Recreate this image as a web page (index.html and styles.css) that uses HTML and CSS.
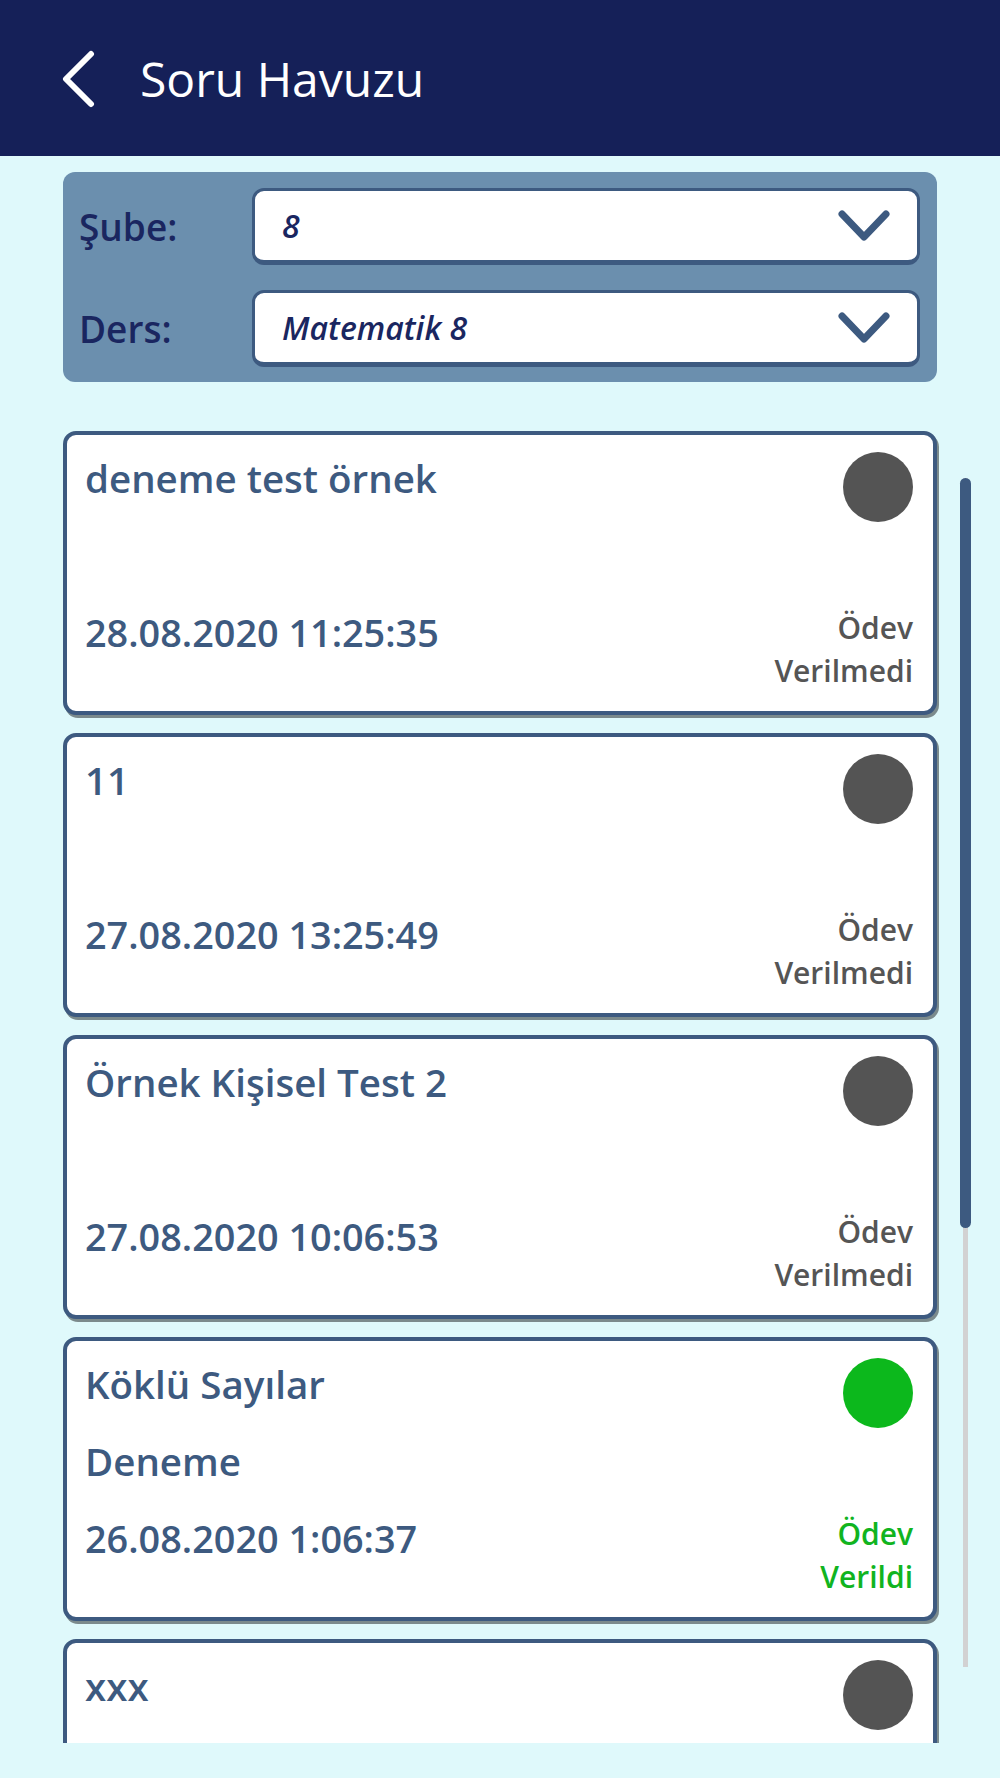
FILE: index.html
```html
<!DOCTYPE html>
<html lang="tr">
<head>
    <meta charset="UTF-8">
    <meta name="viewport" content="width=device-width, initial-scale=1.0">
    <title>Soru Havuzu</title>
    <link rel="stylesheet" href="styles.css">
</head>
<body>
    <header class="topbar">
        <svg class="back-icon" width="38" height="58" viewBox="0 0 38 58">
            <polyline points="32,4 7,29 32,54" fill="none" stroke="#fff" stroke-width="6" stroke-linecap="round" stroke-linejoin="round"/>
        </svg>
        <h1 class="page-title">Soru Havuzu</h1>
    </header>

    <main class="content">
        <div class="filter-box">
            <div class="filter-row">
                <span class="filter-label">Şube:</span>
                <div class="picker">
                    <span class="picker-value">8</span>
                    <svg class="picker-arrow" width="52" height="32" viewBox="0 0 52 32">
                        <polyline points="4,4 26,27 48,4" fill="none" stroke="#3d5a80" stroke-width="7" stroke-linecap="round" stroke-linejoin="round"/>
                    </svg>
                </div>
            </div>
            <div class="filter-row">
                <span class="filter-label">Ders:</span>
                <div class="picker">
                    <span class="picker-value">Matematik 8</span>
                    <svg class="picker-arrow" width="52" height="32" viewBox="0 0 52 32">
                        <polyline points="4,4 26,27 48,4" fill="none" stroke="#3d5a80" stroke-width="7" stroke-linecap="round" stroke-linejoin="round"/>
                    </svg>
                </div>
            </div>
        </div>

        <div class="list-wrap">
            <div class="test-list">
                <div class="test-card">
                    <div class="test-title">deneme test örnek</div>
                    <div class="test-sub"></div>
                    <div class="test-date">28.08.2020 11:25:35</div>
                    <span class="status-dot"></span>
                    <div class="status-text">Ödev<br>Verilmedi</div>
                </div>
                <div class="test-card">
                    <div class="test-title">11</div>
                    <div class="test-sub"></div>
                    <div class="test-date">27.08.2020 13:25:49</div>
                    <span class="status-dot"></span>
                    <div class="status-text">Ödev<br>Verilmedi</div>
                </div>
                <div class="test-card">
                    <div class="test-title">Örnek Kişisel Test 2</div>
                    <div class="test-sub"></div>
                    <div class="test-date">27.08.2020 10:06:53</div>
                    <span class="status-dot"></span>
                    <div class="status-text">Ödev<br>Verilmedi</div>
                </div>
                <div class="test-card">
                    <div class="test-title">Köklü Sayılar</div>
                    <div class="test-sub">Deneme</div>
                    <div class="test-date">26.08.2020 1:06:37</div>
                    <span class="status-dot done"></span>
                    <div class="status-text done">Ödev<br>Verildi</div>
                </div>
                <div class="test-card">
                    <div class="test-title">xxx</div>
                    <span class="status-dot"></span>
                </div>
            </div>
            <div class="scroll-track">
                <div class="scroll-thumb"></div>
            </div>
        </div>
    </main>
</body>
</html>
```

FILE: styles.css
```css
body {
    margin: 0;
    background-color: #dff9fb;
    font-family: 'Open Sans', 'Noto Sans', sans-serif;
    height: 1778px;
    overflow: hidden;
}
.topbar {
    height: 156px;
    background-color: #152058;
    display: flex;
    align-items: center;
    padding-left: 59px;
}
.back-icon {
    margin-top: 2px;
}
.page-title {
    margin: 0 0 0 43px;
    color: #fff;
    font-size: 48px;
    font-weight: 400;
}
.content {
    padding: 16px 0 0 63px;
}
.filter-box {
    width: 874px;
    box-sizing: border-box;
    background-color: #6b8fae;
    border-radius: 12px;
    padding: 16px 17px 15px 16px;
    display: flex;
    flex-direction: column;
    gap: 25px;
}
.filter-row {
    display: flex;
    align-items: center;
}
.filter-label {
    width: 173px;
    color: #1a2660;
    font-size: 37px;
    font-weight: 600;
}
.picker {
    flex: 1;
    height: 77px;
    box-sizing: border-box;
    background: #fff;
    border: 3px solid #3d5a80;
    border-bottom-width: 5px;
    border-radius: 12px;
    display: flex;
    align-items: center;
    justify-content: space-between;
    padding: 0 27px 0 27px;
}
.picker-value {
    color: #1a2660;
    font-size: 32px;
    font-style: italic;
    font-weight: 600;
}
.list-wrap {
    margin-top: 49px;
    height: 1312px;
    overflow: hidden;
    display: flex;
    align-items: flex-start;
}
.test-list {
    width: 874px;
    display: flex;
    flex-direction: column;
    gap: 18px;
}
.test-card {
    flex-shrink: 0;
    height: 284px;
    box-sizing: border-box;
    background: #fff;
    border: 4px solid #3d5a80;
    border-radius: 13px;
    box-shadow: 2px 3px 0 #7b8a8c;
    padding: 17px 20px 19px 18px;
    display: grid;
    grid-template-columns: 1fr auto;
    grid-template-rows: 77px 77px auto;
    color: #3d5a80;
}
.test-title, .test-sub {
    font-size: 38.5px;
    font-weight: 600;
    line-height: 53px;
}
.test-title { grid-column: 1; grid-row: 1; }
.test-sub { grid-column: 1; grid-row: 2; }
.test-date {
    grid-column: 1;
    grid-row: 3;
    font-size: 37.8px;
    font-weight: 600;
    line-height: 53px;
}
.status-dot {
    grid-column: 2;
    grid-row: 1;
    justify-self: end;
    width: 70px;
    height: 70px;
    border-radius: 50%;
    background-color: #545454;
}
.status-dot.done {
    background-color: #0cb81c;
}
.status-text {
    grid-column: 2;
    grid-row: 3;
    text-align: right;
    font-size: 30px;
    font-weight: 600;
    line-height: 43px;
    color: #555;
}
.status-text.done {
    color: #11b41f;
}
.scroll-track {
    margin: 47px 0 0 23px;
    width: 11px;
    height: 1189px;
    display: flex;
    flex-direction: column;
    align-items: center;
    background: linear-gradient(#d2d2d2, #d2d2d2) center / 5px 100% no-repeat;
    border-radius: 3px;
}
.scroll-thumb {
    width: 11px;
    height: 750px;
    background-color: #3d5a80;
    border-radius: 6px;
}
```
